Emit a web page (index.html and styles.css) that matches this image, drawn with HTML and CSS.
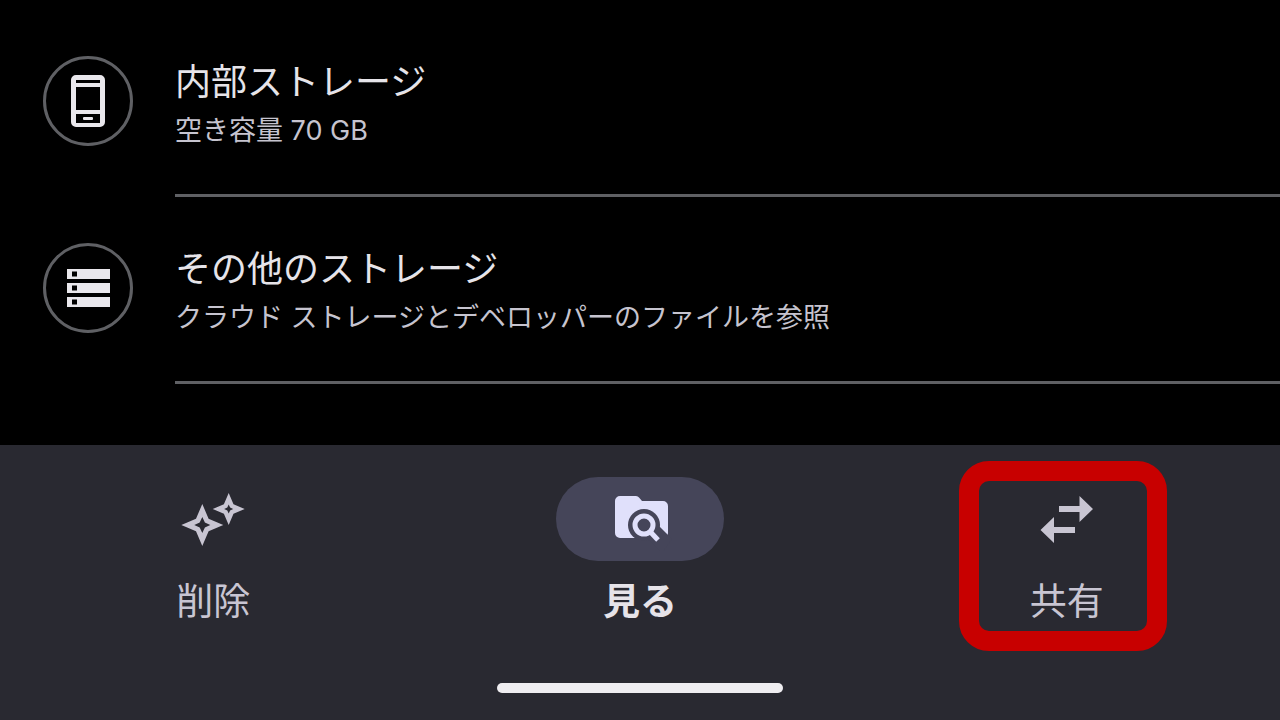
FILE: index.html
```html
<!DOCTYPE html>
<html lang="ja">
<head>
    <meta charset="UTF-8">
    <meta name="viewport" content="width=device-width, initial-scale=1.0">
    <title>Files</title>
    <link rel="stylesheet" href="styles.css">
</head>
<body>
    <main class="storage-list">
        <a class="storage-item" href="#internal">
            <span class="storage-icon">
                <svg viewBox="0 0 64 64" aria-hidden="true">
                    <path fill-rule="evenodd" d="M20 6h24a5 5 0 0 1 5 5v42a5 5 0 0 1-5 5H20a5 5 0 0 1-5-5V11a5 5 0 0 1 5-5zM20 11v3h24v-3zM20 18v23h24V18zM20 45v9h24v-9z"/>
                    <rect x="27" y="48" width="10" height="3" rx="1"/>
                </svg>
            </span>
            <span class="storage-text">
                <span class="storage-title">内部ストレージ</span>
                <span class="storage-sub">空き容量 70 GB</span>
            </span>
        </a>
        <a class="storage-item" href="#other">
            <span class="storage-icon">
                <svg viewBox="0 0 64 64" aria-hidden="true">
                    <path fill-rule="evenodd" d="M11 13h43v10H11zM16 15.500v5h5v-5zM11 27h43v10H11zM16 29.500v5h5v-5zM11 41h43v10H11zM16 43.500v5h5v-5z"/>
                </svg>
            </span>
            <span class="storage-text">
                <span class="storage-title">その他のストレージ</span>
                <span class="storage-sub">クラウド ストレージとデベロッパーのファイルを参照</span>
            </span>
        </a>
    </main>

    <footer class="bottom-bar">
        <nav class="tabs">
            <button type="button" class="tab">
                <span class="tab-icon">
                    <svg viewBox="0 0 64 64" aria-hidden="true">
                        <path fill-rule="evenodd" d="M21.300 17L27.600 31.700L42.300 38L27.600 44.300L21.300 59L15 44.300L0.300 38L15 31.700zM21.300 30L18.700 35.400L13.300 38L18.700 40.600L21.300 46L23.900 40.600L29.300 38L23.900 35.400z"/>
                        <path fill-rule="evenodd" d="M47.700 6L52.500 17.200L63.700 22L52.500 26.800L47.700 38L42.900 26.800L31.700 22L42.900 17.200zM47.700 17.500L46.300 20.600L43.200 22L46.300 23.400L47.700 26.500L49.100 23.400L52.200 22L49.100 20.600z"/>
                    </svg>
                </span>
                <span class="tab-label">削除</span>
            </button>
            <button type="button" class="tab active" aria-current="page">
                <span class="tab-icon">
                    <svg viewBox="0 0 64 64" aria-hidden="true">
                        <path d="M12 9h16q2 0 3 1.500L34 14h21a5 5 0 0 1 5 5v27a5 5 0 0 1-5 5H12a5 5 0 0 1-5-5V14a5 5 0 0 1 5-5z"/>
                        <g class="lens-gap">
                            <circle cx="36" cy="38" r="16"/>
                            <path d="M48 36l16 16-10 14-20-20z"/>
                        </g>
                        <circle class="lens" cx="36" cy="38" r="9"/>
                        <path class="lens" d="M42 44.500L50 53"/>
                    </svg>
                </span>
                <span class="tab-label">見る</span>
            </button>
            <button type="button" class="tab highlighted">
                <span class="tab-icon">
                    <svg viewBox="0 0 64 64" aria-hidden="true">
                        <path d="M24 19h20.500V9L58 22 44.500 35V25H24zM40 40v6H19v10L5.500 43 19 30v10z"/>
                    </svg>
                </span>
                <span class="tab-label">共有</span>
            </button>
        </nav>
        <div class="home-bar"></div>
    </footer>
</body>
</html>
```
FILE: styles.css
```css
* {
    box-sizing: border-box;
}
body {
    margin: 0;
    min-height: 100vh;
    display: flex;
    flex-direction: column;
    background-color: #000;
    color: #e6e4e9;
    font-family: Inter, "Noto Sans CJK JP", sans-serif;
}
svg {
    display: block;
    width: 64px;
    height: 64px;
    fill: currentColor;
}

/* storage list */
.storage-list {
    flex: 1;
    padding-top: 10px;
}
.storage-item {
    display: flex;
    gap: 42px;
    padding-left: 43px;
    color: inherit;
    text-decoration: none;
}
.storage-icon {
    display: flex;
    align-items: center;
    justify-content: center;
    flex: none;
    width: 90px;
    height: 90px;
    margin-top: 46px;
    border: 3px solid #5f6064;
    border-radius: 50%;
    color: #e9e7ec;
}
.storage-text {
    flex: 1;
    display: flex;
    flex-direction: column;
    padding: 46px 0 40px;
    border-bottom: 3px solid #5f6064;
}
.storage-title {
    font-size: 36px;
    line-height: 52px;
}
.storage-sub {
    color: #c6c4cf;
    font-size: 27px;
    line-height: 46px;
}

/* bottom navigation */
.bottom-bar {
    padding: 16px 0 27px;
    background-color: #292931;
}
.tabs {
    display: grid;
    grid-template-columns: repeat(3, 1fr);
    justify-items: center;
}
.tab {
    position: relative;
    display: flex;
    flex-direction: column;
    align-items: center;
    width: 208px;
    height: 190px;
    padding: 16px 0 0;
    border: none;
    background: none;
    color: #c8c5d2;
    font-family: inherit;
    cursor: pointer;
}
.tab-icon {
    display: flex;
    align-items: center;
    justify-content: center;
    width: 168px;
    height: 84px;
    border-radius: 42px;
}
.tab-label {
    margin-top: 14px;
    font-size: 37px;
    line-height: 54px;
}
.active .tab-icon {
    background-color: #454559;
    color: #e0e0fb;
}
.active .tab-label {
    color: #e6e3e9;
    font-weight: 700;
}
.lens-gap {
    fill: #454559;
}
.lens {
    fill: none;
    stroke: currentColor;
    stroke-width: 5px;
}
.highlighted::after {
    content: "";
    position: absolute;
    inset: 0 4px 0 -4px;
    border: 20px solid #c80000;
    border-radius: 30px;
}
.home-bar {
    width: 286px;
    height: 10px;
    margin: 32px auto 0;
    border-radius: 5px;
    background-color: #efedf1;
}
```
